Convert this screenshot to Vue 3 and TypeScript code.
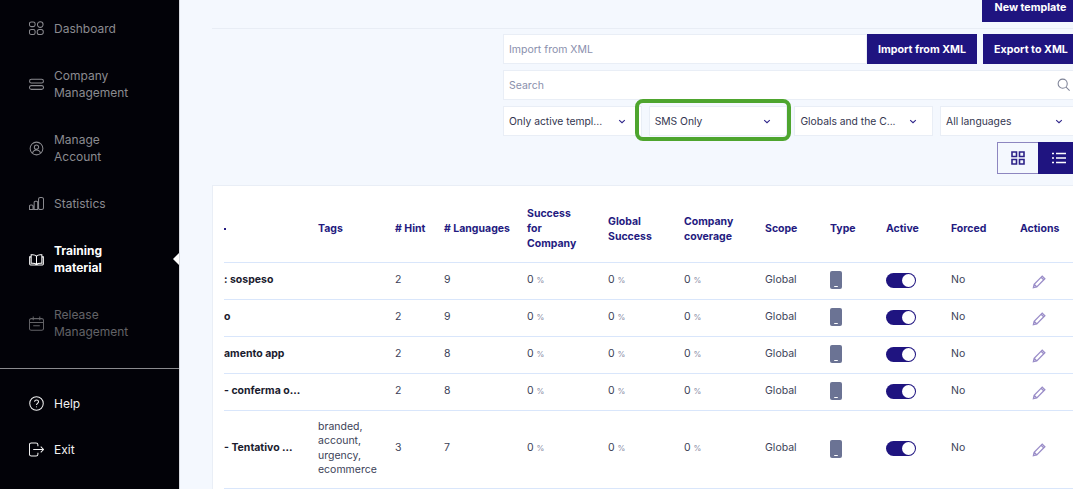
<template>
  <div class="page">
    <aside class="sidebar">
      <nav class="nav">
        <a v-for="item in navItems" :key="item.label" class="nav-item" :class="item.state">
          <svg class="nav-icon" viewBox="0 0 16 16"><path :d="item.icon" /></svg>
          <span class="nav-label">{{ item.label }}</span>
        </a>
      </nav>
      <div class="nav-bottom">
        <a v-for="item in bottomItems" :key="item.label" class="nav-item bottom">
          <svg class="nav-icon" viewBox="0 0 16 16"><path :d="item.icon" /></svg>
          <span class="nav-label">{{ item.label }}</span>
        </a>
      </div>
    </aside>

    <main class="main">
      <div class="top-bar">
        <button class="btn new-btn">New template</button>
      </div>

      <div class="toolbar">
        <div class="import-row">
          <input class="field" placeholder="Import from XML" />
          <button class="btn import-btn">Import from XML</button>
          <button class="btn export-btn">Export to XML</button>
        </div>
        <div class="search-row">
          <input class="field" placeholder="Search" />
          <svg class="search-icon" viewBox="0 0 16 16">
            <circle cx="6.500" cy="6.500" r="5.200" />
            <path d="M10.400 10.400l4 4" />
          </svg>
        </div>
        <div class="filter-row">
          <div v-for="f in filters" :key="f" class="select">
            <span class="select-text">{{ f }}</span>
            <svg class="chevron" viewBox="0 0 10 6"><path d="M1.500 1.200l3.500 3.300 3.500-3.300" /></svg>
          </div>
          <div class="highlight"></div>
        </div>
        <div class="view-row">
          <button class="view-btn grid-view">
            <svg viewBox="0 0 14 14"><path d="M1 1h4.500v4.500H1zM8.500 1H13v4.500H8.500zM1 8.500h4.500V13H1zM8.500 8.500H13V13H8.500z" /></svg>
          </button>
          <button class="view-btn list-view">
            <svg viewBox="0 0 14 14"><path d="M4 2.500h10M4 7h10M4 11.500h10M0 2.500h2M0 7h2M0 11.500h2" /></svg>
          </button>
        </div>
      </div>

      <section class="card">
        <table class="table">
          <colgroup>
            <col v-for="(w, i) in colWidths" :key="i" :style="{ width: w + 'px' }" />
          </colgroup>
          <thead>
            <tr>
              <th><span class="sort-mark"></span></th>
              <th v-for="h in headers" :key="h">{{ h }}</th>
            </tr>
          </thead>
          <tbody>
            <tr v-for="row in rows" :key="row.name">
              <td class="name">{{ row.name }}</td>
              <td class="tags">{{ row.tags }}</td>
              <td>{{ row.hint }}</td>
              <td>{{ row.languages }}</td>
              <td><span class="pct">0 <small>%</small></span></td>
              <td><span class="pct">0 <small>%</small></span></td>
              <td><span class="pct">0 <small>%</small></span></td>
              <td>Global</td>
              <td>
                <svg class="phone" viewBox="0 0 12 18">
                  <rect width="12" height="18" rx="2" fill="#6b7394" />
                  <rect x="4.200" y="15" width="3.600" height="1" fill="#fff" />
                </svg>
              </td>
              <td><span class="toggle"><span class="knob"></span></span></td>
              <td>No</td>
              <td>
                <svg class="pencil" viewBox="0 0 16 16">
                  <path d="M1.500 14.500l.8-3.600 8.600-8.600 2.800 2.800-8.600 8.600zM9.700 3.500l2.800 2.800M2.300 10.900l2.800 2.800" />
                </svg>
              </td>
            </tr>
          </tbody>
        </table>
      </section>
    </main>
  </div>
</template>

<script setup lang="ts">
interface NavItem {
  label: string
  icon: string
  state?: string
}

interface Row {
  name: string
  tags: string
  hint: number
  languages: number
}

const navItems: NavItem[] = [
  {
    label: 'Dashboard',
    icon: 'M2.500 1h2a2 2 0 0 1 2 2v1a2 2 0 0 1-2 2h-2a2 2 0 0 1-2-2V3a2 2 0 0 1 2-2zM12 .8a3 3 0 0 1 0 6 3 3 0 0 1 0-6zM2.500 9h2a2 2 0 0 1 2 2v1.500a2 2 0 0 1-2 2h-2a2 2 0 0 1-2-2V11a2 2 0 0 1 2-2zM11 9h2a2.200 2.200 0 0 1 2.200 2.200v1A2.200 2.200 0 0 1 13 14.500h-2a2.200 2.200 0 0 1-2.200-2.200v-1A2.200 2.200 0 0 1 11 9z'
  },
  {
    label: 'Company Management',
    icon: 'M2.500 2.500h11a1.900 1.900 0 0 1 0 3.800h-11a1.900 1.900 0 0 1 0-3.800zM2.500 9.200h11a2 2 0 0 1 0 4h-11a2 2 0 0 1 0-4z'
  },
  {
    label: 'Manage Account',
    icon: 'M8 1.200a6.800 6.800 0 1 1 0 13.600 6.800 6.800 0 0 1 0-13.600zM8 4.300a2.300 2.300 0 1 1 0 4.600 2.300 2.300 0 0 1 0-4.600zM3.800 13c.5-2.300 2.200-3.400 4.200-3.400s3.700 1.100 4.200 3.400'
  },
  {
    label: 'Statistics',
    icon: 'M1.800 9.500h1.200a1.300 1.300 0 0 1 1.300 1.300v3.700H.5v-3.700a1.300 1.300 0 0 1 1.300-1.300zM6.800 5.500h1.200a1.300 1.300 0 0 1 1.300 1.300v7.700H5.500V6.800a1.300 1.300 0 0 1 1.300-1.300zM12 1.500h1.500a2 2 0 0 1 2 2v9a2 2 0 0 1-2 2H12a1.800 1.800 0 0 1-1.800-1.800v-9.400A1.800 1.800 0 0 1 12 1.500z'
  },
  {
    label: 'Training material',
    state: 'active',
    icon: 'M8 4.500C6.800 3 4.800 2.700 2.300 3v9c2.500-.3 4.500 0 5.700 1.200 1.200-1.200 3.200-1.500 5.700-1.200V3C11.200 2.700 9.200 3 8 4.500zM8 4.500v8.700M2.300 5.200H.7v7.600c0 .6.400 1 1 1h12.600c.6 0 1-.4 1-1V5.200h-1.600'
  },
  {
    label: 'Release Management',
    state: 'muted',
    icon: 'M2.500 2.800h11a2 2 0 0 1 2 2v8.500a2 2 0 0 1-2 2h-11a2 2 0 0 1-2-2V4.800a2 2 0 0 1 2-2zM4.500.5v4M11.500.5v4M.5 7h15M4.500 10.500h7'
  }
]

const bottomItems: NavItem[] = [
  {
    label: 'Help',
    icon: 'M8 .8a7.200 7.200 0 1 1 0 14.400A7.200 7.200 0 0 1 8 .8zM5.900 6.200C6 5 6.900 4.300 8 4.300c1.200 0 2.200.8 2.200 1.900 0 1.800-2.200 1.700-2.200 3.500M8 11.100v.9'
  },
  {
    label: 'Exit',
    icon: 'M9.500 4.500V3A2 2 0 0 0 7.500 1H2.500a2 2 0 0 0-2 2v10a2 2 0 0 0 2 2h5a2 2 0 0 0 2-2v-1.500M4.500 8h11M12.500 5l3 3-3 3'
  }
]

const filters = ['Only active templ...', 'SMS Only', 'Globals and the C...', 'All languages']

const colWidths = [94, 77, 49, 83, 81, 76, 81, 65, 56, 65, 69, 60]

// line breaks follow the narrow columns of the table
const headers = [
  'Tags',
  '# Hint',
  '# Languages',
  'Success\nfor\nCompany',
  'Global\nSuccess',
  'Company\ncoverage',
  'Scope',
  'Type',
  'Active',
  'Forced',
  'Actions'
]

const rows: Row[] = [
  { name: ': sospeso', tags: '', hint: 2, languages: 9 },
  { name: 'o', tags: '', hint: 2, languages: 9 },
  { name: 'amento app', tags: '', hint: 2, languages: 8 },
  { name: '- conferma o...', tags: '', hint: 2, languages: 8 },
  { name: '- Tentativo ...', tags: 'branded, account, urgency, ecommerce', hint: 3, languages: 7 }
]
</script>

<style>
html,
body {
  margin: 0;
  overflow: hidden;
}
</style>

<style scoped>
.page {
  display: flex;
  width: 1073px;
  height: 489px;
  overflow: hidden;
  background: #f4f8fe;
  font-family: Inter, "Liberation Sans", sans-serif;
  font-size: 10.5px;
  color: #3c3f58;
}

.sidebar {
  flex: none;
  width: 179px;
  height: 489px;
  border-right: 1px solid #d8dae0;
  background: #020208;
}

.nav {
  display: flex;
  flex-direction: column;
  gap: 30px;
  height: 369px;
  box-sizing: border-box;
  padding-top: 20px;
  border-bottom: 1px solid #8a8a8e;
}

.nav-bottom {
  display: flex;
  flex-direction: column;
  gap: 29px;
  padding-top: 26px;
}

.nav-item {
  position: relative;
  display: flex;
  align-items: center;
  gap: 10px;
  padding-left: 29px;
  color: #8b8b90;
  font-size: 12px;
  line-height: 17px;
}

.nav-item.muted {
  color: #636367;
}

.nav-item.active {
  color: #fff;
  font-weight: 700;
}

.nav-item.active::after {
  content: "";
  position: absolute;
  right: 0;
  top: 11px;
  border: 6px solid transparent;
  border-right: 6px solid #fff;
  border-left: 0;
}

.nav-item.bottom {
  color: #f2f2f2;
}

.nav-icon {
  flex: none;
  width: 15px;
  height: 15px;
  fill: none;
  stroke: currentColor;
  stroke-width: 1.1;
}

.nav-label {
  width: 90px;
}

.main {
  flex: none;
  width: 867px;
  margin-top: -8px;
  padding-left: 32px;
}

.top-bar {
  display: flex;
  justify-content: flex-end;
  height: 36px;
  border-bottom: 1px solid #e8edf5;
}

.btn {
  border: 0;
  padding: 0;
  background: #1f1480;
  color: #fff;
  font-family: inherit;
  font-size: 10.7px;
  font-weight: 700;
}

.new-btn {
  width: 97px;
  height: 30px;
}

.toolbar {
  display: flex;
  flex-direction: column;
  gap: 6px;
  width: 576px;
  margin: 5px 0 0 auto;
}

.import-row {
  display: flex;
  height: 30px;
}

.field {
  box-sizing: border-box;
  flex: 1;
  min-width: 0;
  height: 30px;
  border: 1px solid #e9eef6;
  padding: 0 5px;
  background: #fff;
  font-family: inherit;
  font-size: 10.5px;
  outline: none;
}

.field::placeholder {
  color: #8a90ad;
  opacity: 1;
}

.import-btn {
  flex: none;
  width: 110px;
  margin-right: 6px;
}

.export-btn {
  flex: none;
  width: 96px;
}

.search-row {
  position: relative;
  display: flex;
}

.search-icon {
  position: absolute;
  right: 8px;
  top: 8px;
  width: 14px;
  height: 14px;
  fill: none;
  stroke: #7d8296;
  stroke-width: 1.2;
}

.filter-row {
  position: relative;
  display: grid;
  grid-template-columns: repeat(4, 138.7px);
  gap: 7px;
}

.select {
  display: flex;
  align-items: center;
  justify-content: space-between;
  box-sizing: border-box;
  height: 30px;
  border: 1px solid #e9eef6;
  padding: 0 15px 0 5px;
  background: #fff;
  color: #33364f;
  font-size: 10.3px;
}

.select-text {
  white-space: nowrap;
}

.chevron {
  width: 8px;
  height: 5px;
  fill: none;
  stroke: #2c2288;
  stroke-width: 1.3;
}

.highlight {
  position: absolute;
  left: 132px;
  top: -7px;
  width: 148px;
  height: 34px;
  border: 4px solid #4ea52e;
  border-radius: 8px;
}

.view-row {
  display: flex;
  justify-content: flex-end;
}

.view-btn {
  box-sizing: border-box;
  height: 32px;
  padding: 0;
  border: 1px solid #8d86c0;
  background: #f4f8fe;
  display: flex;
  align-items: center;
  justify-content: center;
}

.view-btn svg {
  width: 14px;
  height: 14px;
  fill: none;
  stroke-width: 1.6;
}

.grid-view {
  width: 41px;
  border-right: 0;
}

.grid-view svg {
  stroke: #2c2288;
}

.list-view {
  width: 41px;
  border-color: #1f1480;
  background: #1f1480;
}

.list-view svg {
  stroke: #fff;
}

.card {
  margin-top: 11px;
  height: 320px;
  padding-left: 11px;
  overflow: hidden;
  border: 1px solid #e9eef6;
  border-width: 1px 0 0 1px;
  background: #fff;
}

.table {
  table-layout: fixed;
  width: 856px;
  border-collapse: collapse;
}

th {
  height: 76px;
  padding: 10px 6px 0 0;
  box-sizing: border-box;
  border-bottom: 1px solid #d9e6fb;
  color: #241a80;
  font-size: 10.5px;
  font-weight: 700;
  line-height: 15px;
  text-align: left;
  white-space: pre-line;
}

td {
  height: 37px;
  padding: 0 4px 1px 0;
  box-sizing: border-box;
  border-bottom: 1px solid #d9e6fb;
  line-height: 14.500px;
  vertical-align: middle;
}

tbody tr:last-child td {
  height: 78px;
}

.name {
  overflow: hidden;
  color: #1a1b2e;
  font-weight: 700;
  white-space: nowrap;
}

.sort-mark {
  display: block;
  width: 2px;
  height: 2px;
  background: #241a80;
}

.pct small {
  color: #8a8ea6;
  font-size: 8px;
}

.phone {
  display: block;
  width: 12px;
  height: 18px;
}

.toggle {
  display: flex;
  justify-content: flex-end;
  align-items: center;
  box-sizing: border-box;
  width: 30px;
  height: 15px;
  padding-right: 1px;
  border-radius: 8px;
  background: #1f1480;
}

.knob {
  width: 13px;
  height: 13px;
  border-radius: 50%;
  background: #fff;
}

.pencil {
  display: block;
  width: 15px;
  height: 15px;
  margin-top: 2px;
  margin-left: 12px;
  fill: none;
  stroke: #9a8dc8;
  stroke-width: 1.4;
}
</style>
